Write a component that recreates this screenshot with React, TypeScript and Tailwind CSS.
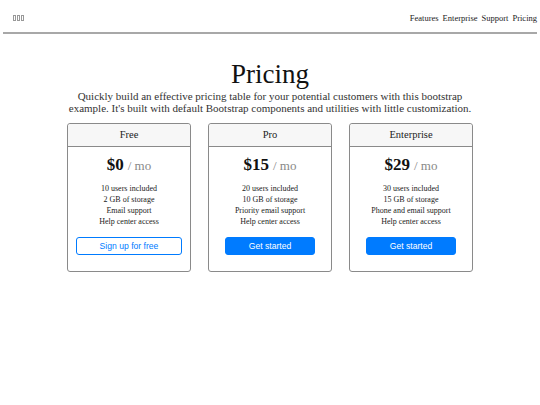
import { FunctionComponent } from "react";

interface Plan {
  name: string;
  price: string;
  features: string[];
  button: string;
  outline: boolean;
}

const plans: Plan[] = [
  {
    name: "Free",
    price: "$0",
    features: ["10 users included", "2 GB of storage", "Email support", "Help center access"],
    button: "Sign up for free",
    outline: true,
  },
  {
    name: "Pro",
    price: "$15",
    features: ["20 users included", "10 GB of storage", "Priority email support", "Help center access"],
    button: "Get started",
    outline: false,
  },
  {
    name: "Enterprise",
    price: "$29",
    features: ["30 users included", "15 GB of storage", "Phone and email support", "Help center access"],
    button: "Get started",
    outline: false,
  },
];

const PlanCard: FunctionComponent<{ plan: Plan }> = ({ plan }) => {
  return (
    <div className="w-[124px] border border-[#8a8a8a] rounded-[3px] bg-white flex flex-col">
      <div className="h-[23px] bg-[#f7f7f7] border-b border-[#8a8a8a] rounded-t-[3px] flex items-center justify-center text-[10.5px] text-[#222]">
        {plan.name}
      </div>
      <div className="flex flex-col items-center pt-[5px] pb-[16px] px-[8px]">
        <div className="flex items-baseline h-[22px]">
          <span className="text-[17px] font-bold text-[#111]">{plan.price}</span>
          <span className="text-[13px] text-[#888] ml-[4px]">/ mo</span>
        </div>
        <ul className="mt-[9px] text-[8px] leading-[11px] text-[#222] text-center">
          {plan.features.map((f) => (
            <li key={f}>{f}</li>
          ))}
        </ul>
        <button
          className={
            plan.outline
              ? "mt-[10px] w-full h-[18px] rounded-[3px] border border-[#007bff] bg-white text-[#007bff] text-[8.6px] font-['Liberation_Sans',sans-serif]"
              : "mt-[10px] w-[90px] h-[18px] rounded-[3px] border border-[#007bff] bg-[#007bff] text-white text-[8.6px] font-['Liberation_Sans',sans-serif]"
          }
        >
          {plan.button}
        </button>
      </div>
    </div>
  );
};

export default function App() {
  return (
    <div className="w-[540px] h-[405px] bg-white font-['Liberation_Serif',serif] text-[#222]">
      <header className="mx-[3px] h-[34px] pt-[4px] border-b-2 border-[#a8a8a8] flex items-center justify-between pl-[10px] pr-[0px]">
        <div className="flex gap-[1px]">
          <span className="w-[3px] h-[6px] border border-[#999]"></span>
          <span className="w-[3px] h-[6px] border border-[#999]"></span>
          <span className="w-[3px] h-[6px] border border-[#999]"></span>
        </div>
        <nav className="flex gap-[4px] text-[8.5px] text-[#222]">
          <a>Features</a>
          <a>Enterprise</a>
          <a>Support</a>
          <a>Pricing</a>
        </nav>
      </header>
      <section className="flex flex-col items-center mt-[25px]">
        <h1 className="text-[27px] leading-[31px] text-[#111]">Pricing</h1>
        <p className="text-[11px] leading-[12px] text-[#333] text-center whitespace-nowrap">
          Quickly build an effective pricing table for your potential customers with this bootstrap
          <br />
          example. It's built with default Bootstrap components and utilities with little customization.
        </p>
      </section>
      <div className="flex justify-center gap-[17px] mt-[9px]">
        {plans.map((p) => (
          <PlanCard key={p.name} plan={p} />
        ))}
      </div>
    </div>
  );
}
